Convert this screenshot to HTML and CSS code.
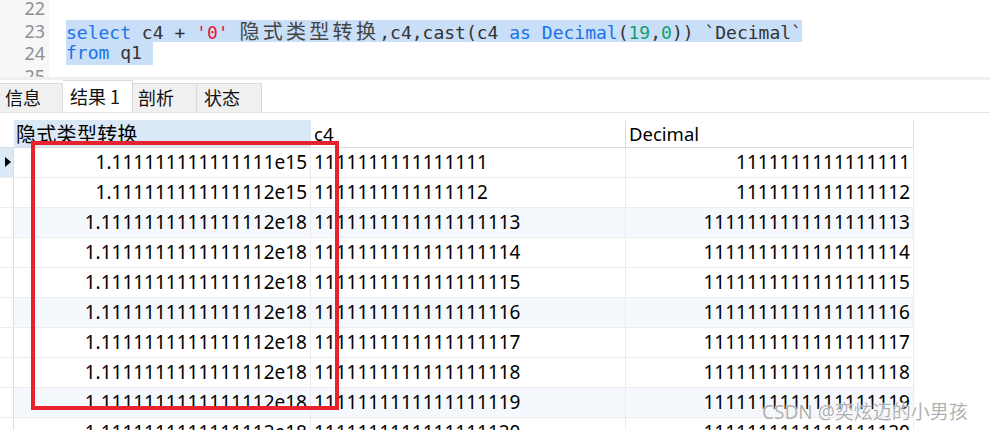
FILE: index.html
```html
<!DOCTYPE html>
<html lang="zh">
<head>
<meta charset="utf-8">
<title>查询结果</title>
<link rel="stylesheet" href="styles.css">
</head>
<body>
<div class="page">
  <div class="editor">
    <div class="gutter">
      <div class="ln">22</div>
      <div class="ln">23</div>
      <div class="ln">24</div>
      <div class="ln">25</div>
    </div>
    <div class="code">
      <div class="line"></div>
      <div class="line"><span class="sel"><span class="kw">select</span> c4 + <span class="str">'0'</span> <span class="cjk">隐式类型转换</span>,c4,cast(c4 <span class="kw">as</span> <span class="kw">Decimal</span>(<span class="num">19</span>,<span class="num">0</span>)) `Decimal`</span></div>
      <div class="line"><span class="sel"><span class="kw">from</span> q1 </span></div>
      <div class="line"></div>
    </div>
  </div>
  <div class="divider"></div>
  <div class="tabs">
    <div class="tab">信息</div>
    <div class="tab active">结果 1</div>
    <div class="tab">剖析</div>
    <div class="tab">状态</div>
  </div>
  <div class="grid">
    <div class="row head">
      <div class="ind"></div>
      <div class="cell hsel">隐式类型转换</div>
      <div class="cell">c4</div>
      <div class="cell">Decimal</div>
    </div>
    <div class="row">
      <div class="ind cur"><span class="arrow"></span></div>
      <div class="cell r">1.111111111111111e15</div>
      <div class="cell">1111111111111111</div>
      <div class="cell r">1111111111111111</div>
    </div>
    <div class="row">
      <div class="ind"></div>
      <div class="cell r">1.111111111111112e15</div>
      <div class="cell">1111111111111112</div>
      <div class="cell r">1111111111111112</div>
    </div>
    <div class="row alt">
      <div class="ind"></div>
      <div class="cell r">1.1111111111111112e18</div>
      <div class="cell">1111111111111111113</div>
      <div class="cell r">1111111111111111113</div>
    </div>
    <div class="row">
      <div class="ind"></div>
      <div class="cell r">1.1111111111111112e18</div>
      <div class="cell">1111111111111111114</div>
      <div class="cell r">1111111111111111114</div>
    </div>
    <div class="row">
      <div class="ind"></div>
      <div class="cell r">1.1111111111111112e18</div>
      <div class="cell">1111111111111111115</div>
      <div class="cell r">1111111111111111115</div>
    </div>
    <div class="row alt">
      <div class="ind"></div>
      <div class="cell r">1.1111111111111112e18</div>
      <div class="cell">1111111111111111116</div>
      <div class="cell r">1111111111111111116</div>
    </div>
    <div class="row">
      <div class="ind"></div>
      <div class="cell r">1.1111111111111112e18</div>
      <div class="cell">1111111111111111117</div>
      <div class="cell r">1111111111111111117</div>
    </div>
    <div class="row">
      <div class="ind"></div>
      <div class="cell r">1.1111111111111112e18</div>
      <div class="cell">1111111111111111118</div>
      <div class="cell r">1111111111111111118</div>
    </div>
    <div class="row alt">
      <div class="ind"></div>
      <div class="cell r">1.1111111111111112e18</div>
      <div class="cell">1111111111111111119</div>
      <div class="cell r">1111111111111111119</div>
    </div>
    <div class="row">
      <div class="ind"></div>
      <div class="cell r">1.1111111111111112e18</div>
      <div class="cell">1111111111111111120</div>
      <div class="cell r">1111111111111111120</div>
    </div>
  </div>
  <div class="mark"></div>
  <div class="watermark">CSDN @奕炫迈的小男孩</div>
</div>
</body>
</html>
```
FILE: styles.css
```css
html, body {
  margin: 0;
  padding: 0;
  background: #fff;
}
body {
  width: 990px;
  height: 430px;
  overflow: hidden;
  font-family: "Noto Sans", "Noto Sans CJK SC", sans-serif;
}
.page {
  position: relative;
  width: 990px;
  height: 430px;
  overflow: hidden;
}
.editor {
  display: flex;
  height: 77px;
  overflow: hidden;
}
.gutter {
  width: 49px;
  background: #f7f7f7;
  margin-top: -3px;
}
.ln {
  height: 22.5px;
  line-height: 22.5px;
  text-align: right;
  padding-right: 4px;
  font-size: 18px;
  color: #8f8f8f;
  font-family: "Noto Sans", sans-serif;
}
.code {
  padding-left: 17px;
  margin-top: -3px;
  font-family: "DejaVu Sans Mono", monospace;
  font-size: 18px;
  color: #333;
}
.line {
  height: 22.5px;
  line-height: 22.5px;
  white-space: pre;
}
.sel {
  display: inline-block;
  background: #c9def7;
  height: 22.5px;
}
.kw { color: #1a73e8; }
.str { color: #e5173a; }
.num { color: #0f9f73; }
.cjk {
  font-family: "Noto Sans CJK SC", sans-serif;
  font-size: 20px;
  letter-spacing: 3.3px;
  color: #444;
}
.divider {
  height: 3px;
  background: #efefef;
}
.tabs {
  display: flex;
  align-items: flex-end;
  height: 32px;
  border-bottom: 1px solid #e6e6e6;
}
.tab {
  box-sizing: border-box;
  height: 29px;
  line-height: 27px;
  padding: 0 5px;
  background: #f0f0f0;
  border: 1px solid #dadada;
  border-bottom: none;
  border-left: none;
  font-size: 18px;
  color: #111;
  font-family: "Noto Sans CJK SC", sans-serif;
}
.tab:nth-child(1) { width: 63px; }
.tab:nth-child(3) { width: 64px; }
.tab:nth-child(4) { width: 65px; padding-left: 7px; }
.tab.active {
  background: #fff;
  height: 32px;
  line-height: 30px;
  width: 70px;
  padding-left: 7px;
}
.grid {
  margin-top: 7px;
}
.row {
  display: grid;
  grid-template-columns: 14px 297px 315px 288px;
  height: 30px;
  box-sizing: border-box;
  border-bottom: 1px solid #ececec;
  width: 914px;
  font-size: 19px;
  color: #000;
}
.row.head {
  height: 28px;
  border-bottom: 1px solid #dcdcdc;
  font-size: 18.5px;
}
.row.alt .cell {
  background: #f5f8fc;
}
.ind {
  border-right: 1px solid #dcdcdc;
  position: relative;
}
.head .ind { border-right-color: transparent; }
.ind.cur { background: #dce9f6; }
.arrow {
  position: absolute;
  left: 5px;
  top: 9px;
  width: 0;
  height: 0;
  border-top: 5px solid transparent;
  border-bottom: 5px solid transparent;
  border-left: 6px solid #000;
}
.cell {
  border-right: 1px solid #ececec;
  padding: 0 3px;
  line-height: 29px;
  white-space: nowrap;
  overflow: hidden;
}
.head .cell {
  border-right-color: #dcdcdc;
  line-height: 27px;
  padding-left: 3px;
}
.cell.hsel {
  background: #dae8f6;
  border-right-color: #dae8f6;
  font-family: "Noto Sans CJK SC", sans-serif;
  font-size: 20px;
  letter-spacing: 0.3px;
  padding-left: 2px;
}
.cell.r {
  text-align: right;
  padding-right: 3px;
}
.mark {
  position: absolute;
  left: 31px;
  top: 141px;
  width: 308px;
  height: 269px;
  box-sizing: border-box;
  border: 4px solid #e8222c;
}
.watermark {
  position: absolute;
  left: 762px;
  top: 397px;
  font-size: 19px;
  color: rgba(150, 150, 150, 0.75);
  text-shadow: 0 0 2px #fff, 0 0 1px #fff;
  white-space: nowrap;
}
```
